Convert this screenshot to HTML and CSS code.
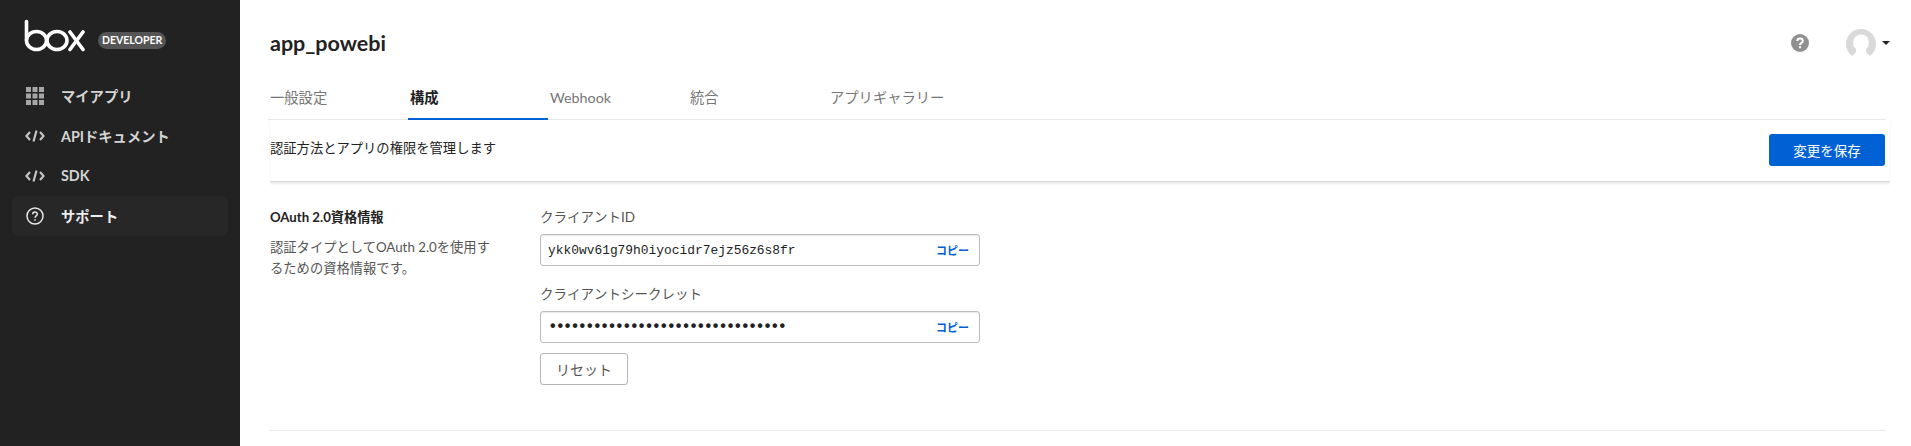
FILE: index.html
```html
<!DOCTYPE html>
<html lang="ja">

<head>
  <meta charset="UTF-8">
  <title>app_powebi</title>
  <link rel="stylesheet" href="styles.css">
</head>

<body>
  <aside class="sidebar">
    <div class="brand">
      <svg class="logo" viewBox="0 0 62 33" width="62" height="33" fill="none" stroke="#fff" stroke-width="3.600" stroke-linecap="round">
        <path d="M2.500 2.500V21"/>
        <ellipse cx="12.500" cy="21.500" rx="10" ry="9"/>
        <ellipse cx="33" cy="21.500" rx="10" ry="9"/>
        <path d="M46 13L59 30.500M59 13L46 30.500"/>
      </svg>
      <span class="badge">DEVELOPER</span>
    </div>
    <nav class="nav">
      <a class="nav-item">
        <svg class="nav-icon" viewBox="0 0 18 18" width="18" height="18" fill="#a6a6a6">
          <path d="M0 0h5v5H0zM6.500 0h5v5h-5zM13 0h5v5h-5zM0 6.500h5v5H0zM6.500 6.500h5v5h-5zM13 6.500h5v5h-5zM0 13h5v5H0zM6.500 13h5v5h-5zM13 13h5v5h-5z"/>
        </svg>
        <span class="nav-label">マイアプリ</span>
      </a>
      <a class="nav-item">
        <svg class="nav-icon code" viewBox="0 0 20 12" width="20" height="12" fill="none" stroke="#c4c4c4" stroke-width="2.200">
          <path d="M5 2L1.500 6 5 10M15 2l3.500 4L15 10M11.500 0.500L8.500 11.500"/>
        </svg>
        <span class="nav-label">APIドキュメント</span>
      </a>
      <a class="nav-item">
        <svg class="nav-icon code" viewBox="0 0 20 12" width="20" height="12" fill="none" stroke="#c4c4c4" stroke-width="2.200">
          <path d="M5 2L1.500 6 5 10M15 2l3.500 4L15 10M11.500 0.500L8.500 11.500"/>
        </svg>
        <span class="nav-label">SDK</span>
      </a>
      <a class="nav-item active">
        <svg class="nav-icon" viewBox="0 0 18 18" width="18" height="18" fill="none" stroke="#e8e8e8" stroke-width="1.500">
          <circle cx="9" cy="9" r="8"/>
          <path d="M6.700 7.200C6.700 4.200 11.300 4.200 11.300 7.100C11.300 8.900 9 8.800 9 10.800"/>
          <path d="M9 12.300v1.500"/>
        </svg>
        <span class="nav-label">サポート</span>
      </a>
    </nav>
  </aside>

  <main class="content">
    <header class="page-header">
      <h1 class="app-name">app_powebi</h1>
      <div class="header-tools">
        <svg class="help" viewBox="0 0 18 18" width="18" height="18">
          <circle cx="9" cy="9" r="9" fill="#909090"/>
          <path d="M6.300 7C6.300 3.800 11.800 3.800 11.800 7C11.800 9 9 8.800 9 11" fill="none" stroke="#fff" stroke-width="2"/>
          <path d="M8 12.300h2v2H8z" fill="#fff"/>
        </svg>
        <div class="user">
          <svg class="avatar" viewBox="0 0 30 28" width="30" height="28">
            <circle cx="15" cy="15" r="15" fill="#d9d9d9"/>
            <circle cx="15" cy="13.500" r="8" fill="#fff"/>
            <path d="M10 15h10v8l4 4v1H6v-1l4-4z" fill="#fff"/>
            <path d="M0 22l5 4.500L10 28H0zM30 22l-5 4.500L20 28h10z" fill="#fff"/>
          </svg>
          <span class="caret"></span>
        </div>
      </div>
    </header>

    <div class="tabs">
      <a class="tab">一般設定</a>
      <a class="tab selected">構成</a>
      <a class="tab">Webhook</a>
      <a class="tab">統合</a>
      <a class="tab">アプリギャラリー</a>
    </div>

    <div class="toolbar">
      <p class="toolbar-text">認証方法とアプリの権限を管理します</p>
      <button class="save">変更を保存</button>
    </div>

    <section class="credentials">
      <div class="cred-info">
        <h2 class="cred-title">OAuth 2.0資格情報</h2>
        <p class="cred-desc">認証タイプとしてOAuth 2.0を使用するための資格情報です。</p>
      </div>
      <div class="cred-fields">
        <div class="field">
          <label class="field-label">クライアントID</label>
          <div class="field-box">
            <span class="field-value">ykk0wv61g79h0iyocidr7ejz56z6s8fr</span>
            <a class="copy">コピー</a>
          </div>
        </div>
        <div class="field">
          <label class="field-label">クライアントシークレット</label>
          <div class="field-box">
            <span class="field-value secret">••••••••••••••••••••••••••••••••</span>
            <a class="copy">コピー</a>
          </div>
        </div>
        <button class="reset">リセット</button>
      </div>
    </section>
  </main>
</body>

</html>
```

FILE: styles.css
```css
*,
*::before,
*::after {
  box-sizing: border-box;
  margin: 0;
  padding: 0;
}

:root {
  --ff-main: 'Lato', 'Noto Sans CJK JP', sans-serif;
  --blue: #0061d5;
  --text: #222;
  --gray: #767676;
  --line: #e8e8e8;
}

body {
  display: flex;
  height: 446px;
  overflow: hidden;
  background-color: #fff;
  color: var(--text);
  font-family: var(--ff-main);
  font-size: 13px;
}

.sidebar {
  flex: 0 0 240px;
  padding: 19px 12px 0;
  background-color: #222;
}

.brand {
  display: flex;
  align-items: center;
  gap: 12px;
  padding-left: 12px;
}

.badge {
  margin-top: 10px;
  padding: 0 4px;
  border-radius: 9px;
  background-color: #555;
  color: #fff;
  font-size: 10.500px;
  font-weight: 700;
  line-height: 17px;
}

.nav {
  margin-top: 24px;
}

.nav-item {
  display: flex;
  align-items: center;
  height: 40px;
  padding-left: 12px;
  border-radius: 6px;
  color: #d3d3d3;
  font-size: 14.300px;
  font-weight: 700;
}

.nav-item.active {
  background-color: #272727;
  color: #eee;
}

.nav-label {
  margin-bottom: 2px;
}

.nav-icon {
  margin-left: 2px;
  margin-right: 17px;
}

.nav-icon.code {
  margin-left: 1px;
  margin-right: 16px;
}

.content {
  flex: 1;
  min-width: 0;
  padding-left: 28px;
  padding-right: 25px;
}

.page-header {
  display: flex;
  align-items: center;
  justify-content: space-between;
  height: 86px;
  padding-left: 2px;
}

.app-name {
  font-size: 21.500px;
  font-weight: 700;
}

.header-tools {
  display: flex;
  align-items: center;
  gap: 37px;
  margin-right: -4px;
}

.user {
  display: flex;
  align-items: center;
  gap: 6px;
}

.caret {
  border-top: 4px solid #222;
  border-left: 4px solid transparent;
  border-right: 4px solid transparent;
}

.tabs {
  display: flex;
  height: 34px;
  border-bottom: 1px solid var(--line);
}

.tab {
  flex: 0 0 140px;
  height: 34px;
  padding-left: 2px;
  color: var(--gray);
  font-size: 14.300px;
  line-height: 24px;
}

.tab.selected {
  border-bottom: 2px solid var(--blue);
  color: var(--text);
  font-weight: 700;
}

.toolbar {
  display: flex;
  align-items: flex-start;
  justify-content: space-between;
  height: 62px;
  margin-left: 2px;
  margin-right: -4px;
  padding-top: 14px;
  padding-right: 5px;
  border-bottom: 1px solid #d8d8d8;
  box-shadow: 0 2px 2px rgba(0, 0, 0, 0.08);
}

.toolbar-text {
  font-size: 13.300px;
  line-height: 28px;
}

.save {
  width: 116px;
  height: 32px;
  border: none;
  border-radius: 3px;
  background-color: var(--blue);
  color: #fff;
  font-family: var(--ff-main);
  font-size: 13.500px;
}

.credentials {
  display: flex;
  height: 249px;
  margin-left: 2px;
  padding-top: 25px;
  border-bottom: 1px solid var(--line);
}

.cred-info {
  flex: 0 0 270px;
  padding-right: 48px;
}

.cred-title {
  font-size: 13.200px;
  font-weight: 700;
  line-height: 20px;
}

.cred-desc {
  margin-top: 10px;
  color: #555;
  font-size: 13.300px;
  line-height: 21px;
}

.field + .field {
  margin-top: 18px;
}

.field-label {
  display: block;
  margin-bottom: 7px;
  color: #555;
  font-size: 13.500px;
  line-height: 20px;
  font-kerning: none;
}

.field-box {
  display: flex;
  align-items: center;
  justify-content: space-between;
  width: 440px;
  height: 32px;
  padding: 0 10px 0 7px;
  border: 1px solid #bcbcbc;
  border-radius: 3px;
  box-shadow: inset 0 1px 1px rgba(0, 0, 0, 0.1);
}

.field-value {
  color: #222;
  font-family: 'Liberation Mono', monospace;
  font-size: 12.900px;
}

.field-value.secret {
  font-size: 16px;
  font-weight: 700;
  letter-spacing: -2.200px;
}

.copy {
  color: var(--blue);
  font-size: 11px;
  font-weight: 700;
}

.reset {
  display: block;
  width: 88px;
  height: 32px;
  margin-top: 10px;
  border: 1px solid #b5b5b5;
  border-radius: 3px;
  background-color: #fff;
  color: #555;
  font-family: var(--ff-main);
  font-size: 14px;
}
```
